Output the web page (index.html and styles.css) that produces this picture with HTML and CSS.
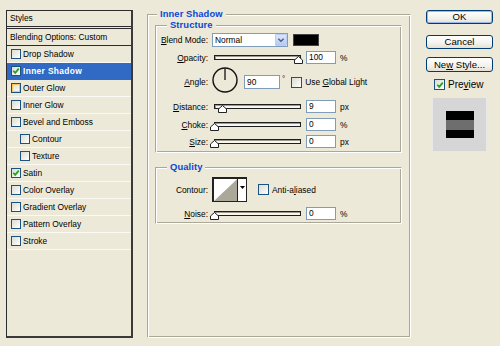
FILE: index.html
```html
<!DOCTYPE html>
<html>
<head>
<meta charset="utf-8">
<link rel="stylesheet" href="styles.css">
</head>
<body>
<div class="dialog">
  <div class="list">
    <div class="hdr">Styles</div>
    <div class="blend">Blending Options: Custom</div>
    <div class="item"><span class="cb"></span>Drop Shadow</div>
    <div class="item sel"><span class="cb"><svg viewBox="0 0 8 8" class="chk"><path d="M1.3 3.8 L3.2 5.9 L6.8 1.6"/></svg></span>Inner Shadow</div>
    <div class="item"><span class="cb hot"></span>Outer Glow</div>
    <div class="item"><span class="cb"></span>Inner Glow</div>
    <div class="item"><span class="cb"></span>Bevel and Emboss</div>
    <div class="item sub"><span class="cb"></span>Contour</div>
    <div class="item sub"><span class="cb"></span>Texture</div>
    <div class="item"><span class="cb"><svg viewBox="0 0 8 8" class="chk"><path d="M1.3 3.8 L3.2 5.9 L6.8 1.6"/></svg></span>Satin</div>
    <div class="item"><span class="cb"></span>Color Overlay</div>
    <div class="item"><span class="cb"></span>Gradient Overlay</div>
    <div class="item"><span class="cb"></span>Pattern Overlay</div>
    <div class="item"><span class="cb"></span>Stroke</div>
  </div>

  <div class="group main">
    <span class="title">Inner Shadow</span>
    <div class="group structure">
      <span class="title">Structure</span>
      <div class="row r-blend">
        <span class="lbl"><u>B</u>lend Mode:</span>
        <div class="select"><span class="sel-text">Normal</span><span class="dd"><svg viewBox="0 0 9 6"><path d="M1.5 1.5 L4.5 4.5 L7.5 1.5"/></svg></span></div>
        <span class="swatch"></span>
      </div>
      <div class="row r-opacity">
        <span class="lbl"><u>O</u>pacity:</span>
        <div class="slider"><div class="track"></div><svg class="handle" style="left:80px" viewBox="0 0 9 8"><path d="M4.5 0.5 L8.5 4 L8.5 7.5 L0.5 7.5 L0.5 4 Z"/></svg></div>
        <span class="field">100</span><span class="unit">%</span>
      </div>
      <div class="row r-angle">
        <span class="lbl"><u>A</u>ngle:</span>
        <svg class="dial" viewBox="0 0 26 26"><circle cx="13" cy="13" r="12"/><path d="M13 13 L13 1.5"/></svg>
        <div class="angle-in">
          <span class="field wide">90</span><span class="deg">°</span>
          <span class="cb big"></span><span class="cblbl">Use <u>G</u>lobal Light</span>
        </div>
      </div>
      <div class="row r-dist">
        <span class="lbl"><u>D</u>istance:</span>
        <div class="slider"><div class="track"></div><svg class="handle" style="left:4px" viewBox="0 0 9 8"><path d="M4.5 0.5 L8.5 4 L8.5 7.5 L0.5 7.5 L0.5 4 Z"/></svg></div>
        <span class="field">9</span><span class="unit">px</span>
      </div>
      <div class="row r-choke">
        <span class="lbl"><u>C</u>hoke:</span>
        <div class="slider"><div class="track"></div><svg class="handle" style="left:-4px" viewBox="0 0 9 8"><path d="M4.5 0.5 L8.5 4 L8.5 7.5 L0.5 7.5 L0.5 4 Z"/></svg></div>
        <span class="field">0</span><span class="unit">%</span>
      </div>
      <div class="row r-size">
        <span class="lbl"><u>S</u>ize:</span>
        <div class="slider"><div class="track"></div><svg class="handle" style="left:-4px" viewBox="0 0 9 8"><path d="M4.5 0.5 L8.5 4 L8.5 7.5 L0.5 7.5 L0.5 4 Z"/></svg></div>
        <span class="field">0</span><span class="unit">px</span>
      </div>
    </div>

    <div class="group quality">
      <span class="title">Quality</span>
      <div class="row r-contour">
        <span class="lbl">Contour:</span>
        <div class="contour">
          <svg class="curve" viewBox="0 0 24 23" preserveAspectRatio="none"><path d="M0 23 L24 0 L24 23 Z"/></svg>
          <span class="cdd"><svg viewBox="0 0 5 3"><path d="M0 0 L5 0 L2.5 3 Z"/></svg></span>
        </div>
        <span class="cb big aa"></span><span class="cblbl">Anti-a<u>l</u>iased</span>
      </div>
      <div class="row r-noise">
        <span class="lbl"><u>N</u>oise:</span>
        <div class="slider"><div class="track"></div><svg class="handle" style="left:-4px" viewBox="0 0 9 8"><path d="M4.5 0.5 L8.5 4 L8.5 7.5 L0.5 7.5 L0.5 4 Z"/></svg></div>
        <span class="field">0</span><span class="unit">%</span>
      </div>
    </div>
  </div>

  <div class="side">
    <div class="btn ok"><span>OK</span></div>
    <div class="btn cancel"><span>Cancel</span></div>
    <div class="btn newstyle"><span>Ne<u>w</u> Style...</span></div>
    <div class="prev-row"><span class="cb big"><svg viewBox="0 0 8 8" class="chk"><path d="M1.3 3.8 L3.2 5.9 L6.8 1.6"/></svg></span><span class="prev-lbl">Pre<u>v</u>iew</span></div>
    <div class="preview"><div class="psq"><div class="pband"></div></div></div>
  </div>
</div>
</body>
</html>
```

FILE: styles.css
```css
html, body {
  margin: 0;
  padding: 0;
  background: #ECE9D8;
}
body {
  font-family: "Liberation Sans", Arial, sans-serif;
  font-size: 8.4px;
  color: #000;
}
u { text-decoration: underline; text-underline-offset: 1px; }

.dialog {
  display: flex;
  align-items: flex-start;
  width: 500px;
  height: 346px;
  padding-left: 6px;
  box-sizing: border-box;
}

/* ---------- styles list ---------- */
.list {
  margin-top: 10px;
  width: 127px;
  height: 328px;
  box-sizing: border-box;
  border: 1px solid #2c2c2c;
  border-right: 2px solid #3a3a3a;
  border-bottom: 2px solid #3a3a3a;
}
.hdr {
  height: 15px;
  line-height: 15px;
  padding-left: 3px;
  border-bottom: 3px double #2c2c2c;
}
.blend {
  height: 16px;
  line-height: 16px;
  padding-left: 3px;
  border-bottom: 1px solid #2c2c2c;
}
.item {
  height: 16px;
  border-bottom: 1px solid #FAF9F3;
  display: flex;
  align-items: center;
  padding-left: 4px;
}
.item.sub { padding-left: 13px; }
.item.sel {
  background: #316AC5;
  color: #fff;
  font-weight: bold;
  letter-spacing: 0.35px;
  border-bottom-color: #316AC5;
}
.item .cb { margin-right: 2px; }

/* ---------- checkbox ---------- */
.cb {
  width: 10px;
  height: 10px;
  box-sizing: border-box;
  border: 1px solid #1C5180;
  background: linear-gradient(135deg, #DCDCD5 0%, #F4F4F0 70%, #fff 100%);
  display: inline-flex;
  align-items: center;
  justify-content: center;
  flex: none;
}
.cb.big { width: 11px; height: 11px; }
.cb.hot { box-shadow: inset 0 0 0 1px #F9C35A; }
.chk { width: 8px; height: 8px; }
.chk path { fill: none; stroke: #21A121; stroke-width: 1.7; }

/* ---------- group boxes ---------- */
.group {
  position: relative;
  box-sizing: border-box;
  border: 1px solid;
  border-color: #ACA899 #fff #fff #ACA899;
  box-shadow: inset 1px 1px 0 #fff, inset -1px -1px 0 #ACA899;
}
.title {
  position: absolute;
  top: -7px;
  left: 9px;
  padding: 0 3px;
  background: #ECE9D8;
  color: #0A46D6;
  font-weight: bold;
  font-size: 9.4px;
  line-height: 12px;
  letter-spacing: 0.1px;
}
.main {
  margin-left: 14px;
  margin-top: 14px;
  width: 264px;
  height: 324px;
}
.structure {
  margin: 10px 8px 0 7px;
  height: 128px;
}
.structure .title, .quality .title { left: 11px; }
.quality {
  margin: 14px 8px 0 7px;
  height: 57px;
}

/* ---------- rows ---------- */
.row {
  display: flex;
  align-items: center;
}
.lbl {
  width: 52px;
  text-align: right;
  margin-right: 4px;
  flex: none;
  white-space: nowrap;
}
.r-blend { margin-top: 7px; height: 14px; }
.r-opacity { margin-top: 4px; height: 13px; }
.r-angle { margin-top: 3px; height: 26px; }
.r-dist { margin-top: 7px; height: 13px; }
.r-choke { margin-top: 5px; height: 13px; }
.r-size { margin-top: 4px; height: 13px; }
.r-contour { margin-top: 9px; height: 25px; }
.r-noise { margin-top: 5px; height: 13px; }

.r-angle .lbl { margin-top: 4px; }

/* select */
.select {
  width: 76px;
  height: 14px;
  box-sizing: border-box;
  border: 1px solid #7F9DB9;
  background: #fff;
  display: flex;
  align-items: center;
  justify-content: space-between;
}
.sel-text { padding-left: 2px; }
.dd {
  width: 12px;
  height: 12px;
  box-sizing: border-box;
  border: 1px solid #B9CDF5;
  border-radius: 1px;
  background: linear-gradient(#DCE7FD, #B5C9F4);
  display: flex;
  align-items: center;
  justify-content: center;
}
.dd svg { width: 8px; height: 6px; }
.dd path { fill: none; stroke: #4D6185; stroke-width: 1.6; }
.swatch {
  width: 26px;
  height: 12px;
  box-sizing: border-box;
  margin-left: 5px;
  background: #000;
  border: 1px solid #444;
}

/* slider */
.slider {
  position: relative;
  width: 87px;
  height: 13px;
  margin-left: 2px;
  display: flex;
  align-items: center;
}
.track {
  width: 100%;
  height: 5px;
  box-sizing: border-box;
  border: 1px solid #1e1e1e;
  background: #F7F6F0;
  box-shadow: inset 1px 1px 0 #9c9a8c;
}
.handle {
  position: absolute;
  top: 5px;
  width: 9px;
  height: 8px;
}
.handle path { fill: #fff; stroke: #222; stroke-width: 1; }

.field {
  width: 30px;
  height: 13px;
  box-sizing: border-box;
  border: 1px solid #7F9DB9;
  background: #fff;
  padding-left: 2px;
  line-height: 11px;
  margin-left: 5px;
  flex: none;
}
.field.wide { width: 36px; height: 14px; line-height: 12px; margin-left: 6px; }
.unit { margin-left: 4px; }

/* angle */
.dial { width: 26px; height: 26px; flex: none; }
.dial circle { fill: none; stroke: #111; stroke-width: 1.4; }
.dial path { stroke: #111; stroke-width: 1.3; }
.angle-in {
  display: flex;
  align-items: center;
  margin-top: 4px;
}
.deg { margin-left: 2px; align-self: flex-start; font-size: 8px; line-height: 8px; }
.r-angle .cb { margin-left: 6px; }
.cblbl { margin-left: 3px; white-space: nowrap; }

/* contour */
.contour {
  width: 35px;
  height: 25px;
  box-sizing: border-box;
  border: 1px solid #222;
  border-top-width: 2px;
  border-left-width: 2px;
  background: #fff;
  display: flex;
}
.curve { width: 24px; height: 100%; display: block; }
.curve path { fill: #ACA899; }
.cdd {
  width: 9px;
  border-left: 1px solid #222;
  background: #fff;
  display: flex;
  justify-content: center;
  padding-top: 7px;
  box-sizing: border-box;
}
.cdd svg { width: 5px; height: 3px; }
.cdd path { fill: #000; }
.aa { margin-left: 11px; }

/* ---------- right side ---------- */
.side {
  margin-left: 15px;
  margin-top: 10px;
  width: 67px;
  display: flex;
  flex-direction: column;
  font-size: 9.6px;
}
.btn {
  height: 14px;
  box-sizing: border-box;
  border: 1px solid #003C74;
  border-radius: 3px;
  background: linear-gradient(#FFFFFF, #F3F2EC 60%, #E3E0D4);
  display: flex;
  align-items: center;
  justify-content: center;
  line-height: 12px;
  white-space: nowrap;
}
.btn.ok { box-shadow: inset 0 0 0 1px #9CB7EC; }
.btn.cancel { margin-top: 11px; }
.btn.newstyle { margin-top: 8px; height: 15px; }
.prev-row {
  display: flex;
  align-items: center;
  margin-top: 6px;
  margin-left: 8px;
  height: 13px;
}
.prev-lbl { margin-left: 3px; font-size: 10px; }
.preview {
  margin-top: 6px;
  margin-left: 6px;
  width: 55px;
  height: 55px;
  box-sizing: border-box;
  background: #D6D6D6;
  border: 1px solid #E8E8E8;
  display: flex;
  align-items: center;
  justify-content: center;
}
.psq {
  width: 28px;
  height: 27px;
  background: #000;
  display: flex;
  flex-direction: column;
  padding-top: 9px;
  box-sizing: border-box;
}
.pband {
  height: 10px;
  background: #6E6E6E;
}
```
